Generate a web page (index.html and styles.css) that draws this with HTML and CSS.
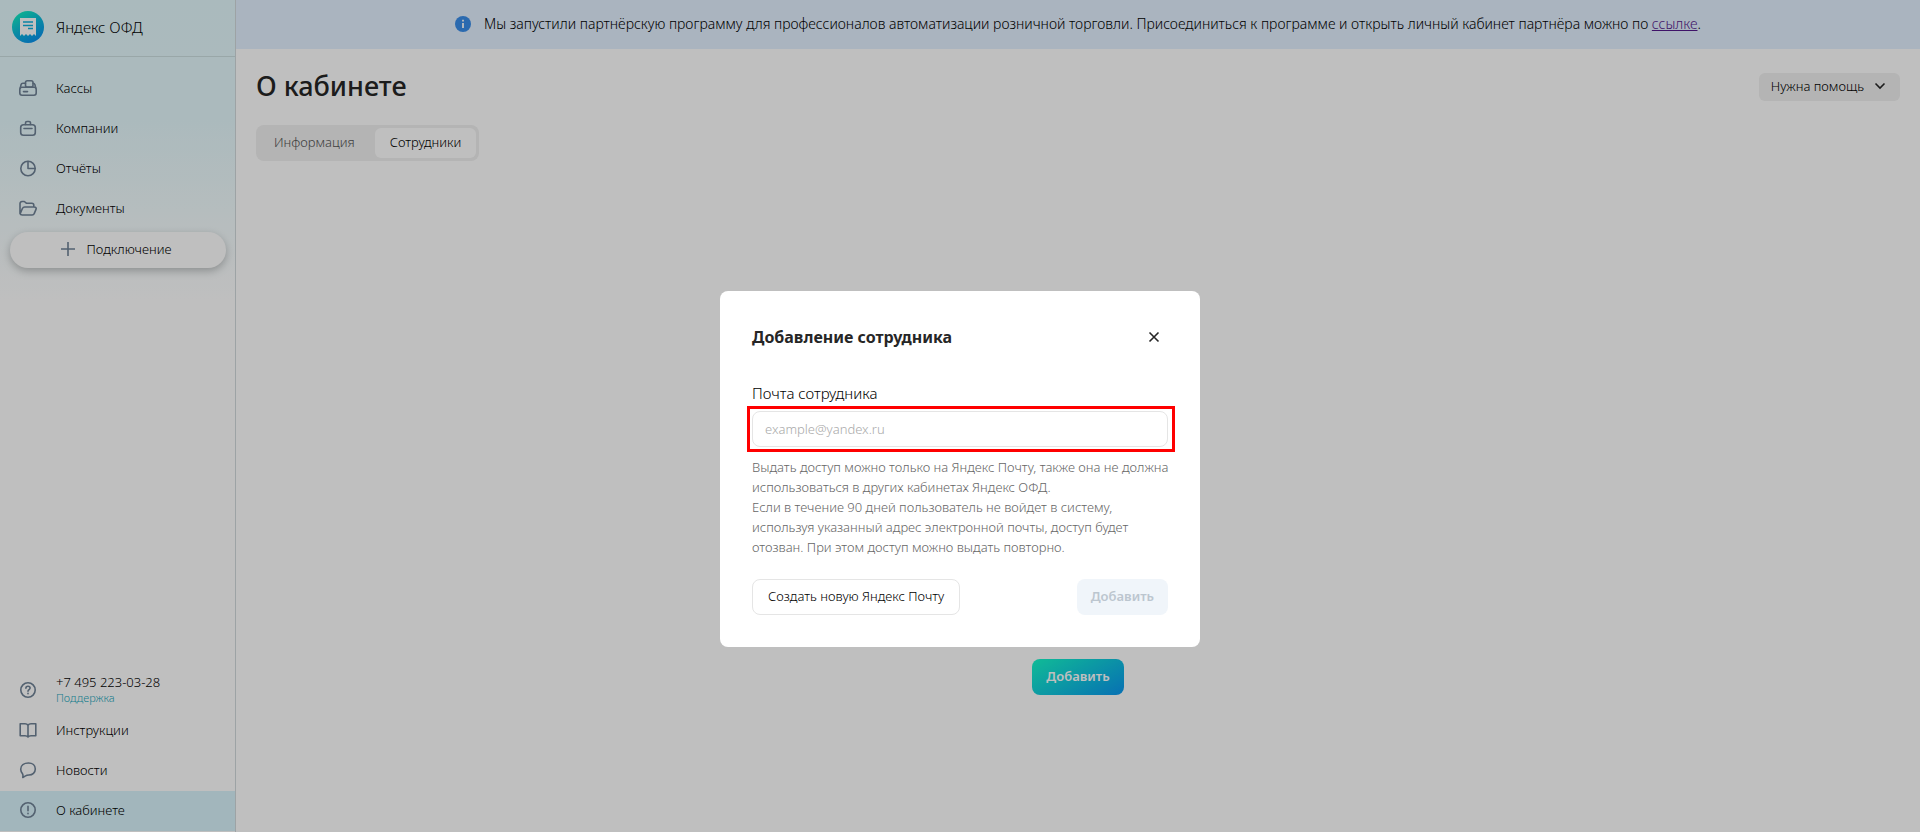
FILE: index.html
```html
<!DOCTYPE html>
<html lang="ru">
<head>
  <meta charset="utf-8">
  <title>Яндекс ОФД</title>
  <meta name="viewport" content="width=device-width, initial-scale=1.0">

  <link rel="stylesheet" href="styles.css">
</head>
<body>

  <div class="app">
    <aside class="sidebar">
      <a class="logo" href="#">
        <svg width="32" height="32" viewBox="0 0 32 32">
          <defs>
            <linearGradient id="logo-fill" x1="0.2" y1="0" x2="0.8" y2="1">
              <stop offset="0" stop-color="#14f0c0"/>
              <stop offset="0.5" stop-color="#0cb8dc"/>
              <stop offset="1" stop-color="#0a8cf0"/>
            </linearGradient>
          </defs>
          <circle cx="16" cy="16" r="16" fill="url(#logo-fill)"/>
          <path d="M8 7h16v18l-2-2-2 2-2-2-2 2-2-2-2 2-2-2-2 2z" fill="#fff"/>
          <path d="M11 11h10M11 14.500h10M16 17.500h5" stroke="#0cb0dc" stroke-width="1.500"/>
        </svg>
        <span>Яндекс ОФД</span>
      </a>

      <nav class="menu">
        <a class="menu-item" href="#">
          <svg class="icon" viewBox="0 0 20 20"><path d="M7.500 5.300H5a2 2 0 0 0-2 1.500L2.300 10M15 5.300c1.100 0 1.700.6 2 1.500l.7 3.200"/><rect x="7.500" y="2.700" width="7.500" height="6.300" rx="1.800"/><rect x="1.800" y="9.300" width="16.400" height="8" rx="2.200"/><path d="M5.500 13.600H9.500"/></svg>
          Кассы
        </a>
        <a class="menu-item" href="#">
          <svg class="icon" viewBox="0 0 20 20"><rect x="2.700" y="6.800" width="14.600" height="10.500" rx="2.800"/><path d="M7.500 6.500V5A1.500 1.500 0 0 1 9 3.500h2A1.500 1.500 0 0 1 12.500 5v1.500M6 10.500h8"/></svg>
          Компании
        </a>
        <a class="menu-item" href="#">
          <svg class="icon" viewBox="0 0 20 20"><circle cx="10" cy="10.500" r="7.200"/><path d="M10 3.500v7h7"/></svg>
          Отчёты
        </a>
        <a class="menu-item" href="#">
          <svg class="icon" viewBox="0 0 20 20"><path d="M2 15.500V5.500a2 2 0 0 1 2-2h2.300l2 1.700h5.500a2 2 0 0 1 2 2v1.300M2.200 15.600l2.200-5.100A2.600 2.600 0 0 1 6.800 9h9.400c1.700 0 2.400 1.200 1.800 2.400l-1.700 4a2.400 2.400 0 0 1-2.300 1.600H4.300C3 17 2.200 16.500 2 15.500"/></svg>
          Документы
        </a>
        <button class="connect" type="button">
          <svg class="icon-plus" viewBox="0 0 14 14"><path d="M7 0v14M0 7h14"/></svg>
          Подключение
        </button>
      </nav>

      <nav class="menu-bottom">
        <a class="menu-item" href="#">
          <svg class="icon" viewBox="0 0 20 20"><circle cx="10" cy="10" r="7.200"/><path d="M7.900 8.200c0-1.200.9-2 2.100-2s2.100.8 2.100 1.900c0 1.500-2.100 1.500-2.100 3.200M10 13.200v.6"/></svg>
          <span class="support">
            <span>+7 495 223-03-28</span>
            <span class="support-note">Поддержка</span>
          </span>
        </a>
        <a class="menu-item" href="#">
          <svg class="icon" viewBox="0 0 20 20"><path d="M10 5.300C9.300 4.200 8.300 3.800 7 3.800H2.200v12H7c1.300 0 2.300.2 3 1.200.7-1 1.700-1.200 3-1.200h4.800v-12H13c-1.300 0-2.300.4-3 1.500zM10 5.300V17"/></svg>
          Инструкции
        </a>
        <a class="menu-item" href="#">
          <svg class="icon" viewBox="0 0 20 20"><path d="M10.500 3c4 0 6.800 2.500 6.800 6s-2.800 6-6.300 6c-1.300 0-2.500.2-3.500.9L4.800 17.500c.3-1.400.4-2.600-.3-3.700C3.400 12.300 2.700 11 2.700 9.300 2.700 5.500 6 3 10.500 3z"/></svg>
          Новости
        </a>
        <a class="menu-item active" href="#">
          <svg class="icon" viewBox="0 0 20 20"><circle cx="10" cy="10" r="7.200"/><path d="M10 6.300v4.400M10 13.200v.6"/></svg>
          О кабинете
        </a>
      </nav>
    </aside>

    <main class="main">
      <div class="banner">
        <svg width="16" height="16" viewBox="0 0 16 16"><circle cx="8" cy="8" r="8" fill="#3a8eea"/><path d="M8 3.800v1.800M8 7v5" stroke="#fff" stroke-width="1.800"/></svg>
        <p>Мы запустили партнёрскую программу для профессионалов автоматизации розничной торговли. Присоединиться к программе и открыть личный кабинет партнёра можно по <a href="#">ссылке</a>.</p>
      </div>

      <div class="content">
        <header class="page-header">
          <h1>О кабинете</h1>
          <button class="help" type="button">
            Нужна помощь
            <svg width="12" height="12" viewBox="0 0 12 12"><path d="M1.500 3.500L6 8l4.500-4.500"/></svg>
          </button>
        </header>

        <div class="tabs">
          <button class="tab" type="button">Информация</button>
          <button class="tab selected" type="button">Сотрудники</button>
        </div>

        <div class="empty">
          <button class="add" type="button">Добавить</button>
        </div>
      </div>
    </main>
  </div>

  <div class="overlay">
    <form class="modal" role="dialog" aria-labelledby="modal-title">
      <div class="modal-header">
        <h2 id="modal-title">Добавление сотрудника</h2>
        <button class="close" type="button" aria-label="Закрыть">
          <svg width="12" height="12" viewBox="0 0 12 12"><path d="M1.500 1.500l9 9M10.500 1.500l-9 9"/></svg>
        </button>
      </div>

      <label for="email">Почта сотрудника</label>
      <div class="highlight">
        <input id="email" type="email" placeholder="example@yandex.ru">
      </div>

      <p class="hint">Выдать доступ можно только на Яндекс Почту, также она не должна<br>использоваться в других кабинетах Яндекс ОФД.<br>Если в течение 90 дней пользователь не войдет в систему,<br>используя указанный адрес электронной почты, доступ будет<br>отозван. При этом доступ можно выдать повторно.</p>

      <div class="modal-footer">
        <button class="create" type="button">Создать новую Яндекс Почту</button>
        <button class="submit" type="submit" disabled>Добавить</button>
      </div>
    </form>
  </div>

</body>
</html>
```

FILE: styles.css
```css
* {
  box-sizing: border-box;
}

body {
  margin: 0;
  color: #000;
  font-family: "Noto Sans", "Open Sans", sans-serif;
  font-size: 13px;
  font-weight: 300;
  line-height: 20px;
}

h1, h2, p {
  margin: 0;
}

h1, h2 {
  color: #262626;
}

a {
  color: inherit;
  text-decoration: none;
}

button, input {
  font: inherit;
  color: inherit;
  border: none;
  margin: 0;
}

.app {
  display: flex;
  min-height: 100vh;
}

/* Sidebar */
.sidebar {
  display: flex;
  flex-direction: column;
  width: 236px;
  padding-bottom: 1px;
  border-right: 1px solid #d2dadc;
  background: linear-gradient(#e3f8fd 0, #e5f9fd 120px, #fff 300px);
}

.logo {
  display: flex;
  align-items: center;
  gap: 12px;
  height: 57px;
  padding: 0 12px 2px;
  border-bottom: 1px solid #ccdfe0;
  font-size: 15px;
}

.menu {
  padding-top: 11px;
}

.menu-bottom {
  margin-top: auto;
}

.menu-item {
  display: flex;
  align-items: center;
  gap: 18px;
  height: 40px;
  padding-left: 18px;
}

.menu-bottom .menu-item {
  padding-bottom: 2px;
}

.menu-item.active {
  background: #d8f3fb;
}

.icon {
  width: 20px;
  height: 20px;
  fill: none;
  stroke: #6f8296;
  stroke-width: 1.6;
  stroke-linecap: round;
  stroke-linejoin: round;
}

.support {
  display: flex;
  flex-direction: column;
  line-height: 16px;
}

.support-note {
  color: #1ca8bc;
  font-size: 11px;
}

.connect {
  display: flex;
  align-items: center;
  justify-content: center;
  gap: 12px;
  width: calc(100% - 19px);
  height: 36px;
  margin: 4px 9px 0 10px;
  padding: 0 10px 2px 6px;
  border-radius: 18px;
  background: #fff;
  box-shadow: 0 3px 8px rgba(0, 0, 0, 0.25);
}

.icon-plus {
  width: 14px;
  height: 14px;
  stroke: #6f8296;
  stroke-width: 1.6;
}

/* Main area */
.main {
  display: flex;
  flex: 1;
  flex-direction: column;
}

.banner {
  display: flex;
  align-items: center;
  justify-content: center;
  gap: 13px;
  min-height: 49px;
  padding-bottom: 2px;
  background: #e3f0ff;
  font-size: 14px;
}

.banner a {
  color: #551a8b;
  text-decoration: underline;
}

.content {
  display: flex;
  flex: 1;
  flex-direction: column;
  padding: 20px 20px 137px;
}

.page-header {
  display: flex;
  align-items: center;
  justify-content: space-between;
}

h1 {
  padding-bottom: 2px;
  font-size: 27px;
  font-weight: 500;
  line-height: 34px;
}

.help {
  display: flex;
  align-items: center;
  gap: 10px;
  height: 28px;
  padding: 0 14px 2px 12px;
  border-radius: 6px;
  background: #f0f0f0;
}

.help svg, .close svg {
  fill: none;
  stroke: #262626;
  stroke-width: 1.6;
}

.tabs {
  display: flex;
  align-self: flex-start;
  gap: 5px;
  margin-top: 20px;
  padding: 3px;
  border-radius: 8px;
  background: #f0f0f0;
}

.tab {
  height: 30px;
  padding: 0 15px 2px;
  border-radius: 6px;
  background: none;
  color: #555;
}

.tab.selected {
  background: #fff;
  color: #000;
}

.empty {
  display: flex;
  flex: 1;
  align-items: flex-end;
  justify-content: center;
}

.add {
  height: 36px;
  padding: 0 14px 2px;
  border-radius: 8px;
  background: linear-gradient(150deg, #16fac9, #0a96f0);
  color: #fff;
  font-weight: 600;
}

/* Modal */
.overlay {
  position: fixed;
  inset: 0;
  display: flex;
  align-items: center;
  justify-content: center;
  padding-top: 106px;
  background: rgba(0, 0, 0, 0.25);
}

.modal {
  width: 480px;
  padding: 32px;
  border-radius: 8px;
  background: #fff;
}

.modal-header {
  display: flex;
  align-items: center;
  justify-content: space-between;
  margin-bottom: 32px;
}

h2 {
  font-size: 16px;
  line-height: 28px;
}

.close {
  display: flex;
  padding: 8px;
  background: none;
}

label {
  display: block;
  font-size: 15px;
}

/* Red frame around the field */
.highlight {
  margin: 3px -7px 5px -5px;
  padding: 2px 4px 2px 2px;
  border: 3px solid #f00;
}

.highlight input {
  display: block;
  width: 100%;
  height: 36px;
  padding: 0 12px;
  border: 1px solid #e5e5e5;
  border-radius: 8px;
}

.highlight input::placeholder {
  color: #aaa;
}

.hint {
  color: #666;
  white-space: nowrap;
}

.modal-footer {
  display: flex;
  justify-content: space-between;
  margin-top: 22px;
}

.create {
  height: 36px;
  padding: 0 15px 2px;
  border: 1px solid #e5e5e5;
  border-radius: 8px;
  background: #fff;
}

.submit {
  height: 36px;
  padding: 0 14px 2px;
  border-radius: 8px;
  background: #f0f5fa;
  color: #bcc6cf;
  font-weight: 600;
}
```
